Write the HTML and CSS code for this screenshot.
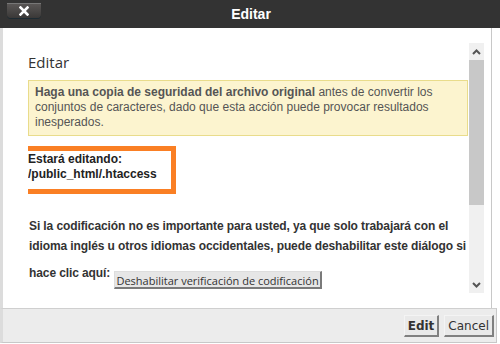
FILE: index.html
```html
<!DOCTYPE html>
<html lang="es">
<head>
    <meta charset="UTF-8">
    <meta name="viewport" content="width=device-width, initial-scale=1.0">
    <title>Editar</title>
    <link rel="stylesheet" href="styles.css">
</head>
<body>
    <div class="dialog">
        <div class="titlebar">
            <button class="close-btn" title="Cerrar">
                <svg width="10" height="10" viewBox="0 0 10 10"><path d="M1.5 1.5 L8.5 8.5 M8.5 1.5 L1.5 8.5" stroke="#fff" stroke-width="2.6" stroke-linecap="square"/></svg>
            </button>
            <h1>Editar</h1>
        </div>

        <div class="dialog-body">
            <div class="scroll-area">
                <div class="content">
                    <h2>Editar</h2>
                    <div class="warning">
                        <b>Haga una copia de seguridad del archivo original</b> antes de convertir los conjuntos de caracteres, dado que esta acción puede provocar resultados inesperados.
                    </div>
                    <div class="editing">
                        Estará editando:<br>
                        /public_html/.htaccess
                    </div>
                    <p class="info">Si la codificación no es importante para usted, ya que solo trabajará con el idioma inglés u otros idiomas occidentales, puede deshabilitar este diálogo si</p>
                    <div class="info click-line">hace clic aquí: <button class="small-btn">Deshabilitar verificación de codificación</button></div>
                </div>
                <div class="scrollbar">
                    <div class="arrow">
                        <svg width="9" height="6" viewBox="0 0 9 6"><path d="M1 5 L4.5 1.5 L8 5" fill="none" stroke="#555" stroke-width="2"/></svg>
                    </div>
                    <div class="thumb"></div>
                    <div class="track"></div>
                    <div class="arrow">
                        <svg width="9" height="6" viewBox="0 0 9 6"><path d="M1 1 L4.5 4.5 L8 1" fill="none" stroke="#555" stroke-width="2"/></svg>
                    </div>
                </div>
            </div>
        </div>

        <div class="footer">
            <button class="btn btn-primary">Edit</button>
            <button class="btn">Cancel</button>
        </div>
    </div>
</body>
</html>
```

FILE: styles.css
```css
body {
    margin: 0;
    padding: 0;
    background-color: #fff;
    font-family: "Liberation Sans", Arial, sans-serif;
}

.dialog {
    width: 500px;
    height: 343px;
}

/* title bar */
.titlebar {
    height: 28px;
    background-color: #333;
    display: flex;
    align-items: center;
    justify-content: center;
    position: relative;
}

.titlebar h1 {
    margin: 0;
    color: #fff;
    font-size: 14px;
    font-weight: bold;
    padding-left: 2px;
}

.close-btn {
    position: absolute;
    left: 7px;
    top: 3px;
    width: 34px;
    height: 15px;
    padding: 0;
    border: none;
    border-top: 1px solid #777;
    border-radius: 0 0 4px 4px;
    background: linear-gradient(#5a5756, #3a3837);
    box-shadow: 0 1px 0 #1d2b33;
    display: flex;
    align-items: center;
    justify-content: center;
}

/* body */
.dialog-body {
    width: 492px;
    height: 280px;
    border-left: 3px solid #dcdcdc;
    border-right: 1px solid #c8c8c8;
    background-color: #fff;
    padding-top: 15px;
    box-sizing: border-box;
}

.scroll-area {
    display: flex;
    height: 250px;
    padding-left: 25px;
}

.content {
    width: 440px;
    margin-right: 1px;
    padding-top: 9px;
    overflow: hidden;
    box-sizing: border-box;
}

h2 {
    margin: 0 0 8px;
    font-family: "Open Sans", sans-serif;
    font-size: 15px;
    font-weight: normal;
    line-height: 20px;
    color: #333;
}

.warning {
    background-color: #fcf4cf;
    border: 1px solid #e9dc8b;
    padding: 4px 6px 5px;
    font-size: 12px;
    line-height: 15px;
    color: #555;
}

.editing {
    width: 155px;
    margin: 10px 0 0 -7px;
    border: 5px solid #fa7f24;
    padding: 1px 2px 7px;
    box-sizing: border-box;
    font-size: 12px;
    font-weight: bold;
    line-height: 15px;
    color: #222;
}

.info {
    margin: 22px 0 0 1px;
    font-size: 12px;
    font-weight: bold;
    letter-spacing: -0.1px;
    line-height: 20px;
    color: #333;
}

.click-line {
    margin-top: 7px;
}

.small-btn {
    font-family: "Open Sans", sans-serif;
    font-size: 11px;
    letter-spacing: 0;
    height: 18px;
    padding: 1px 1px 0;
    margin-left: 1px;
    vertical-align: -8px;
    color: #333;
    background-color: #e6e6e6;
    border: 1px solid #ddd;
    border-right: 2px solid #7a7a7a;
    border-bottom: 2px solid #7a7a7a;
}

/* drawn scrollbar */
.scrollbar {
    width: 15px;
    display: flex;
    flex-direction: column;
    background-color: #f0f0f0;
}

.arrow {
    height: 17px;
    display: flex;
    align-items: center;
    justify-content: center;
}

.thumb {
    height: 145px;
    background-color: #c8c8c8;
}

.track {
    flex: 1;
}

/* footer */
.footer {
    width: 497px;
    height: 35px;
    border-top: 1px solid #cfcfcf;
    border-bottom: 1px solid #c8c8c8;
    border-left: 3px solid #dcdcdc;
    border-right: 1px solid #c8c8c8;
    background-color: #ececec;
    box-sizing: border-box;
    display: flex;
    justify-content: flex-end;
    align-items: flex-start;
    gap: 5px;
    padding: 6px 2px 0 0;
}

.btn {
    height: 22px;
    padding: 0 3px;
    font-family: "DejaVu Sans", Verdana, sans-serif;
    font-size: 12px;
    color: #333;
    background-color: #e9e9e9;
    border: 1px solid #f4f4f4;
    border-right: 2px solid #808080;
    border-bottom: 2px solid #808080;
}

.btn-primary {
    font-weight: bold;
}
```
